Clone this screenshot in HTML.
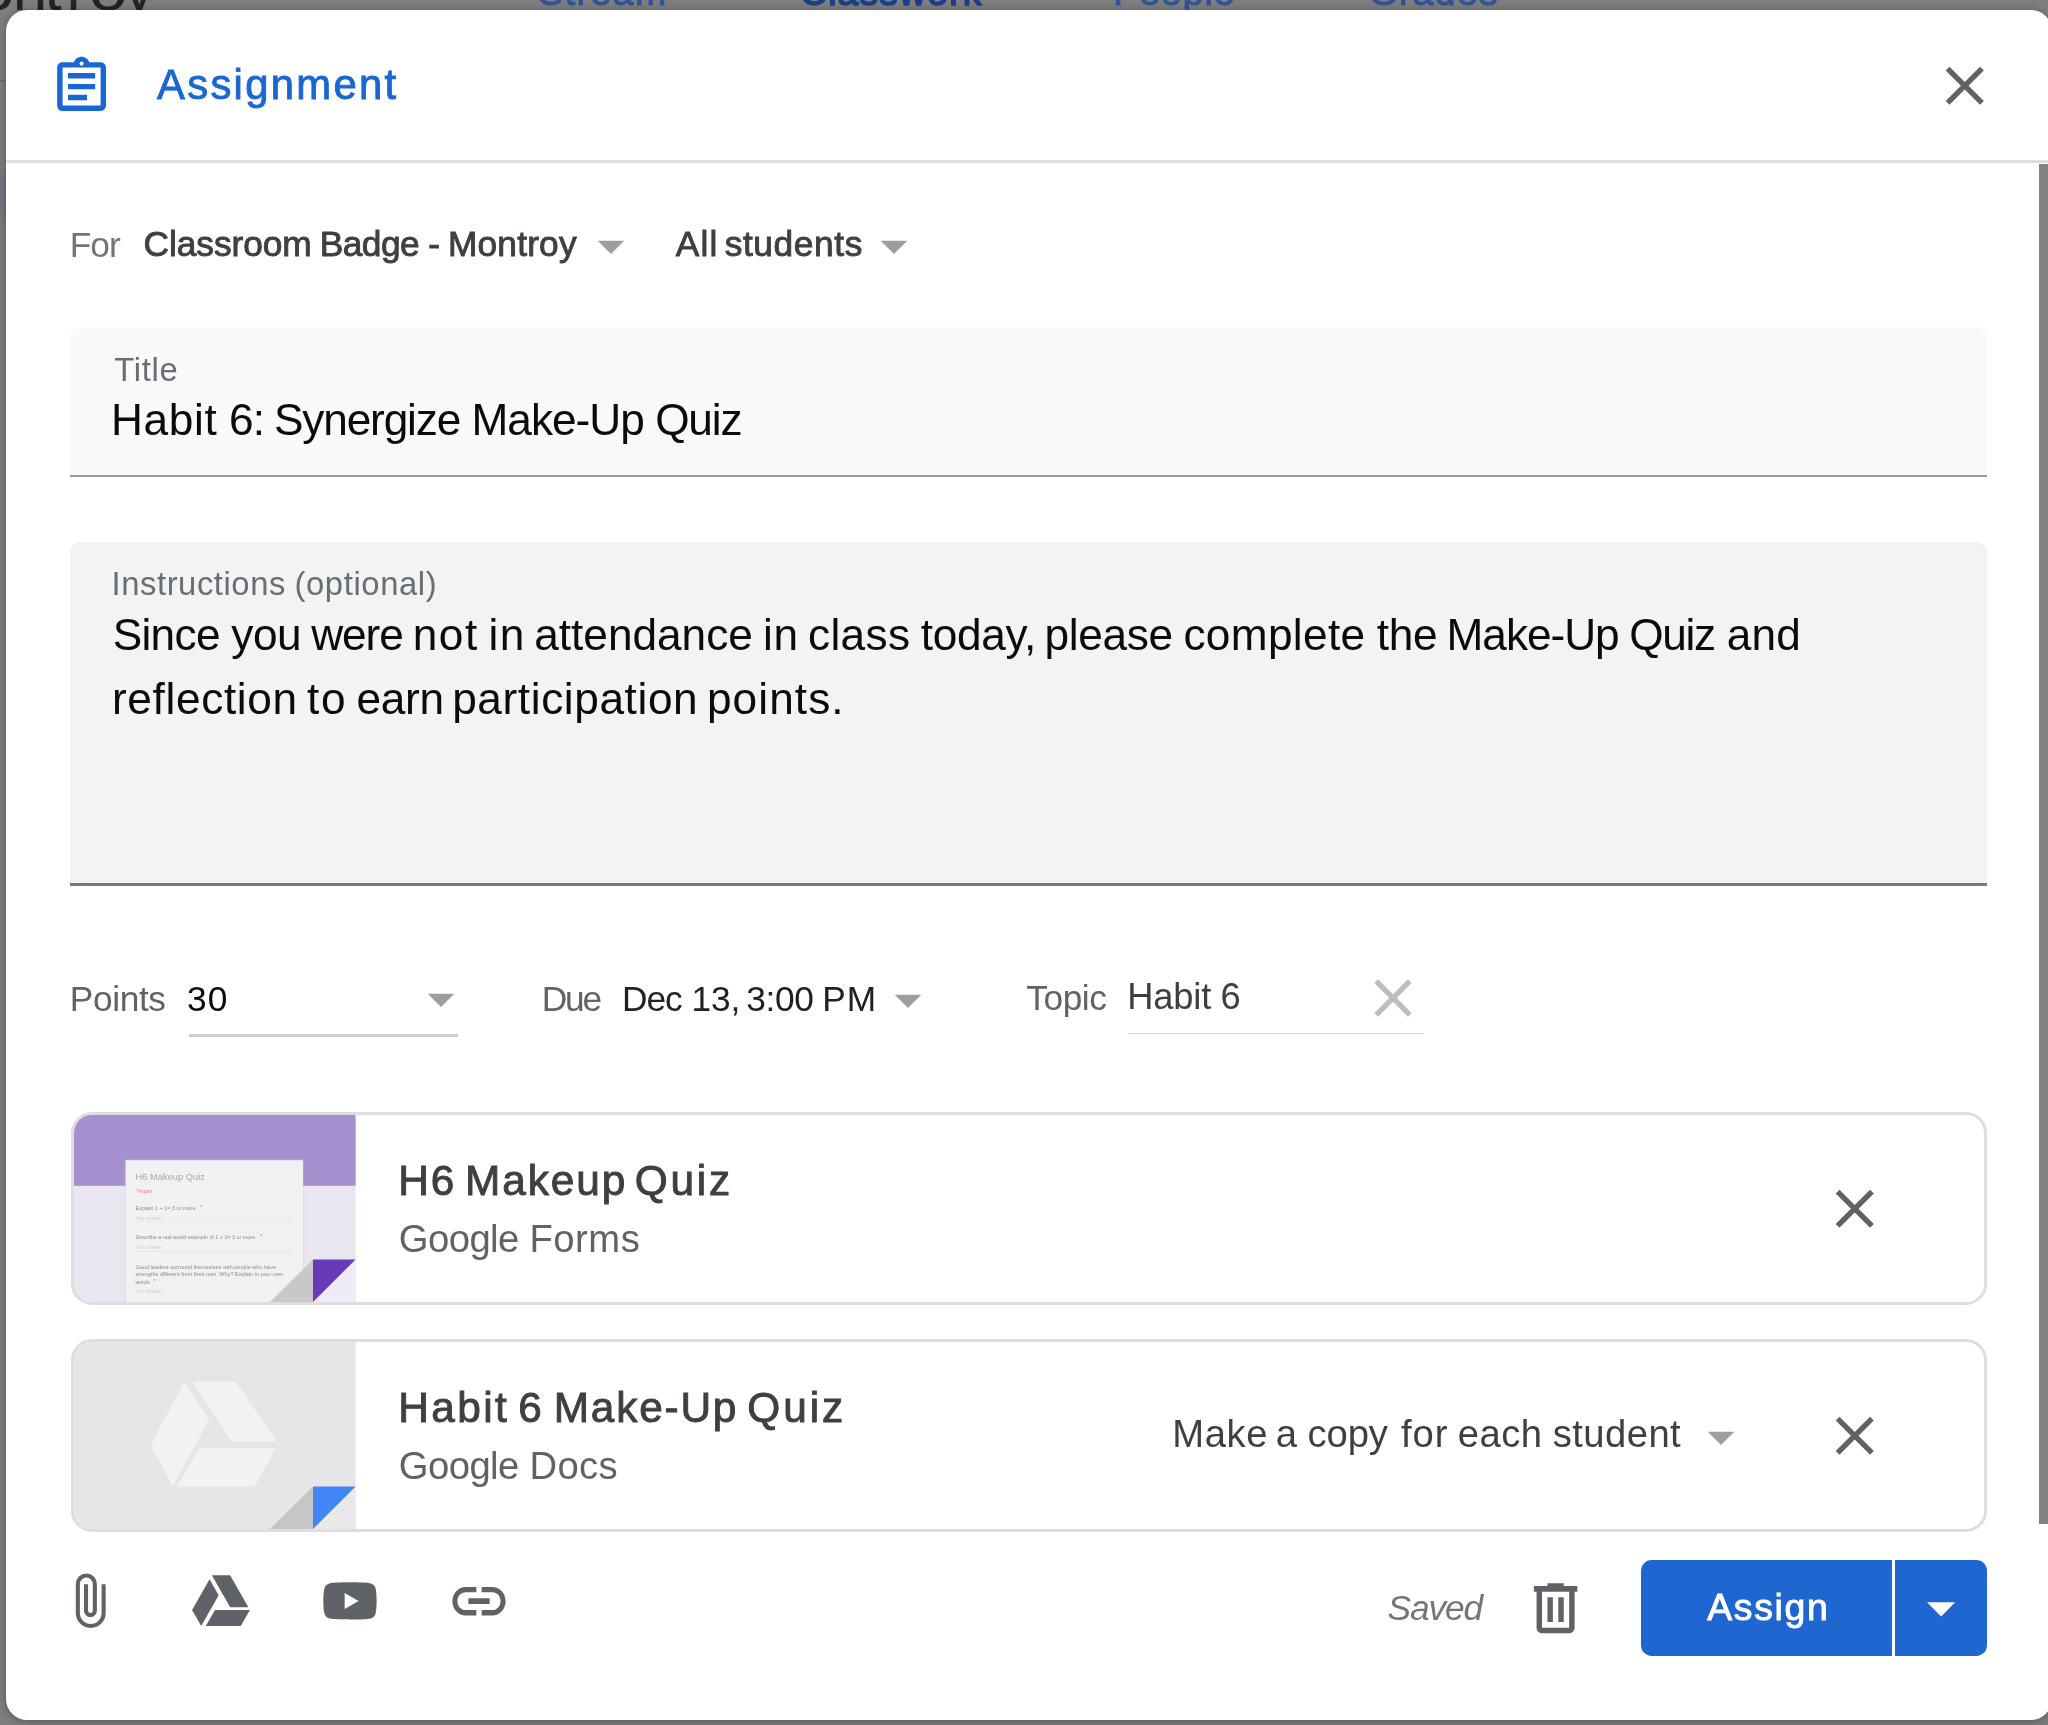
<!DOCTYPE html>
<html><head><meta charset="utf-8"><title>Assignment</title>
<style>
html,body{margin:0;padding:0}
body{width:2048px;height:1725px;overflow:hidden;position:relative;background:#7e7e7e;font-family:'Liberation Sans',sans-serif}
.abs{position:absolute}
.t{position:absolute;white-space:pre;line-height:normal;font-family:'Liberation Sans',sans-serif}
svg{position:absolute;overflow:visible}
.ic{width:64px;height:64px}
#dlg{left:6px;top:10px;width:2046px;height:1710px;background:#fff;border-radius:21px;box-shadow:0 1px 8px rgba(0,0,0,.32)}
.card{left:71px;width:1915.6px;height:193px;box-sizing:border-box;border:3px solid #dcdee2;border-radius:21px;background:#fff;overflow:hidden}
</style></head><body>
<!-- page behind scrim -->
<div style="will-change:transform;position:absolute;left:0;top:0;width:2048px;height:10px;overflow:hidden">
<span class="t" style="left:538.25px;top:-29.3px;font-size:37.4px;letter-spacing:1.5px;color:#2f5597;-webkit-text-stroke:1.1px #2f5597;">Stream</span>
<span class="t" style="left:800.0px;top:-29.3px;font-size:37.4px;letter-spacing:1.125px;color:#1a3f8a;-webkit-text-stroke:1.6px #1a3f8a;">Classwork</span>
<span class="t" style="left:1113.35px;top:-29.3px;font-size:37.4px;letter-spacing:0.94px;color:#2f5597;-webkit-text-stroke:1.1px #2f5597;">People</span>
<span class="t" style="left:1368.75px;top:-29.3px;font-size:37.4px;letter-spacing:1.26px;color:#2f5597;-webkit-text-stroke:1.1px #2f5597;">Grades</span>
<span class="t" style="left:-22.5px;top:-47.4px;font-size:62px;letter-spacing:0px;color:#222326;transform:scaleX(1.13);">o</span>
<span class="t" style="left:12.8px;top:-47.4px;font-size:62px;letter-spacing:0px;color:#222326;">n</span>
<span class="t" style="left:44.5px;top:-47.4px;font-size:62px;letter-spacing:0px;color:#222326;">t</span>
<span class="t" style="left:66.6px;top:-47.4px;font-size:62px;letter-spacing:0px;color:#222326;">r</span>
<span class="t" style="left:90.5px;top:-47.4px;font-size:62px;letter-spacing:0px;color:#222326;transform:scaleX(1.13);">o</span>
<span class="t" style="left:123.5px;top:-47.4px;font-size:62px;letter-spacing:0px;color:#222326;">y</span>
</div>
<div class="abs" style="left:0;top:79.8px;width:6px;height:2.4px;background:#6c6c6c"></div>
<div class="abs" style="left:0;top:160px;width:6px;height:70px;background:linear-gradient(180deg,rgba(100,108,130,0),rgba(100,108,130,.55) 35%,rgba(100,108,130,.45) 60%,rgba(100,108,130,0))"></div>
<div class="abs" id="dlg"></div>
<div class="abs" style="left:6px;top:160px;width:2042px;height:2.8px;background:#dedede"></div>
<div class="abs" style="left:2039px;top:164.4px;width:9px;height:1360px;background:#828282"></div>

<!-- header -->
<svg style="left:48.8px;top:53.6px;width:65.2px;height:65.2px" viewBox="0 0 24 24"><path fill="#1967d2" d="M7 15h7v2H7zm0-4h10v2H7zm0-4h10v2H7zm12-4h-4.180C14.400 1.840 13.300 1 12 1c-1.300 0-2.400.840-2.820 2H5c-.140 0-.270.010-.400.040-.390.080-.740.280-1.010.550-.180.180-.330.400-.430.640-.100.230-.160.490-.160.770v14c0 .270.060.540.160.780s.250.450.430.640c.270.270.620.470 1.010.550.130.020.260.030.400.030h14c1.100 0 2-.900 2-2V5c0-1.100-.900-2-2-2zm-7-.250c.410 0 .750.340.750.750s-.340.750-.750.750-.750-.340-.750-.750.340-.750.750-.750zM19 19H5V5h14v14z"/></svg>
<svg style="left:1932.25px;top:53.25px;width:65.5px;height:65.5px" viewBox="0 0 24 24"><path fill="#5f6368" d="M19 6.410L17.590 5 12 10.590 6.410 5 5 6.410 10.590 12 5 17.590 6.410 19 12 13.410 17.590 19 19 17.590 13.410 12z"/></svg>

<!-- for row arrows -->
<svg class="ic" style="left:579px;top:213.6px" viewBox="0 0 24 24"><path fill="#9e9e9e" d="M7 10l5 5 5-5z"/></svg>
<svg class="ic" style="left:862.3px;top:213.6px" viewBox="0 0 24 24"><path fill="#9e9e9e" d="M7 10l5 5 5-5z"/></svg>

<!-- title field -->
<div class="abs" style="left:70px;top:327.3px;width:1916.5px;height:148px;background:#f8f9fa;border-radius:10.7px 10.7px 0 0"></div>
<div class="abs" style="left:70px;top:474.9px;width:1916.5px;height:2.2px;background:#969ba0"></div>
<!-- instructions field -->
<div class="abs" style="left:70px;top:542.4px;width:1916.5px;height:342px;background:#f1f3f4;border-radius:10.7px 10.7px 0 0"></div>
<div class="abs" style="left:70px;top:883.2px;width:1916.5px;height:3.1px;background:#737a81"></div>

<!-- points/due/topic -->
<div class="abs" style="left:188.5px;top:1034.2px;width:269px;height:2.9px;background:#cfcfcf"></div>
<svg class="ic" style="left:409px;top:966.8px" viewBox="0 0 24 24"><path fill="#9e9e9e" d="M7 10l5 5 5-5z"/></svg>
<svg class="ic" style="left:875.8px;top:967.7px" viewBox="0 0 24 24"><path fill="#9e9e9e" d="M7 10l5 5 5-5z"/></svg>
<div class="abs" style="left:1129px;top:1032.8px;width:295.4px;height:1.4px;background:#d4d6d9"></div>
<svg class="ic" style="left:1360.7px;top:965.5px" viewBox="0 0 24 24"><path fill="#bdbdbd" d="M19 6.410L17.590 5 12 10.590 6.410 5 5 6.410 10.590 12 5 17.590 6.410 19 12 13.410 17.590 19 19 17.590 13.410 12z"/></svg>

<!-- card 1 -->
<div class="abs card" style="top:1112.4px">
<svg style="left:0;top:0;width:281.6px;height:187px" viewBox="0 0 281.6 187">
<defs><filter id="bl" x="-5%" y="-20%" width="110%" height="140%"><feGaussianBlur stdDeviation="0.45"/></filter></defs>
<rect width="281.6" height="187" fill="#e9e6ef"/>
<rect width="281.6" height="70.8" fill="#a58fce"/>
<rect x="50.400" y="43.800" width="179.800" height="144" fill="#cdbfe6" opacity=".3"/>
<rect x="51.600" y="45.200" width="177.400" height="143" fill="#f1f1f1"/>
<g filter="url(#bl)" font-family="'Liberation Sans',sans-serif">
<text x="61.500" y="65.200" font-size="9.600" fill="#a9a9a9" textLength="69.500" lengthAdjust="spacingAndGlyphs">H6 Makeup Quiz</text>
<text x="62" y="78" font-size="4.600" fill="#ee9a90" textLength="16">* Required</text>
<text x="61.500" y="94.700" font-size="6.200" fill="#8c8c8c" textLength="61.500" lengthAdjust="spacingAndGlyphs">Explain 1 + 1= 3 or more.</text>
<text x="126" y="94" font-size="6" fill="#e8766a">*</text>
<text x="62" y="105" font-size="4.800" fill="#cfcfcf" textLength="25" lengthAdjust="spacingAndGlyphs">Your answer</text>
<rect x="62" y="106.600" width="157" height=".7" fill="#e3e3e3"/>
<text x="61.500" y="124.200" font-size="6.200" fill="#8c8c8c" textLength="121" lengthAdjust="spacingAndGlyphs">Describe a real-world example of 1 + 1= 3 or more.</text>
<text x="186" y="123.500" font-size="6" fill="#e8766a">*</text>
<text x="62" y="134.500" font-size="4.800" fill="#cfcfcf" textLength="25" lengthAdjust="spacingAndGlyphs">Your answer</text>
<rect x="62" y="136.200" width="157" height=".7" fill="#e3e3e3"/>
<text x="61.500" y="153.800" font-size="6.200" fill="#8c8c8c" textLength="140.500" lengthAdjust="spacingAndGlyphs">Good leaders surround themselves with people who have</text>
<text x="61.500" y="161.500" font-size="6.200" fill="#8c8c8c" textLength="147.500" lengthAdjust="spacingAndGlyphs">strengths different from their own. Why? Explain in your own</text>
<text x="61.500" y="169.200" font-size="6.200" fill="#8c8c8c" textLength="15.500" lengthAdjust="spacingAndGlyphs">words.</text>
<text x="79.500" y="168.500" font-size="6" fill="#e8766a">*</text>
<text x="62" y="178.500" font-size="4.800" fill="#cfcfcf" textLength="25" lengthAdjust="spacingAndGlyphs">Your answer</text>
</g>
<rect x="239" y="144.400" width="42.600" height="42.600" fill="#f0ebf8"/>
<path d="M196 187L239 144.400V187z" fill="#c8c8c8"/>
<path d="M239 144.400H281.600L239 187z" fill="#673ab7"/>
</svg>
</div>
<svg style="left:1821.75px;top:1175.75px;width:65.5px;height:65.5px" viewBox="0 0 24 24"><path fill="#5f6368" d="M19 6.410L17.590 5 12 10.590 6.410 5 5 6.410 10.590 12 5 17.590 6.410 19 12 13.410 17.590 19 19 17.590 13.410 12z"/></svg>

<!-- card 2 -->
<div class="abs card" style="top:1338.9px">
<svg style="left:0;top:0;width:281.6px;height:187px" viewBox="0 0 281.6 187">
<rect width="281.6" height="187" fill="#e6e6e6"/>
<g fill="#f2f2f2" transform="translate(-74,-1341.900)">
<path d="M184.500 1381.600L209.200 1419.500L172.800 1485.900L150.600 1445z"/>
<path d="M192.500 1381.600H235.800L276.400 1441.400H231.900z"/>
<path d="M199 1448.400H275.600L254.500 1486.300H177.200z"/>
</g>
<rect x="239" y="144.400" width="42.600" height="42.600" fill="#e9e9e9"/>
<path d="M196 187L239 144.400V187z" fill="#c6c6c6"/>
<path d="M239 144.400H281.600L239 187z" fill="#4285f4"/>
</svg>
</div>
<svg class="ic" style="left:1689.1px;top:1404.5px" viewBox="0 0 24 24"><path fill="#9e9e9e" d="M7 10l5 5 5-5z"/></svg>
<svg style="left:1821.75px;top:1403.25px;width:65.5px;height:65.5px" viewBox="0 0 24 24"><path fill="#5f6368" d="M19 6.410L17.590 5 12 10.590 6.410 5 5 6.410 10.590 12 5 17.590 6.410 19 12 13.410 17.590 19 19 17.590 13.410 12z"/></svg>

<!-- footer icons -->
<svg style="left:0;top:0;width:2048px;height:1725px" viewBox="0 0 2048 1725"><path fill="none" stroke="#5f6368" stroke-width="4.100" d="M103.650 1584.300V1613.050A12.900 12.900 0 0 1 77.850 1613.050V1583.950A8.500 8.500 0 0 1 94.850 1583.950V1610.750A4.400 4.400 0 0 1 86.050 1610.750V1584.300"/></svg>
<svg class="ic" style="left:189.4px;top:1569.9px" viewBox="0 0 24 24"><path fill="#5f6368" d="M7.710 3.500L1.150 15l3.430 6 6.550-11.500L7.710 3.500zM9.730 15L6.300 21h13.120l3.430-6H9.730zM22.280 14L15.420 2H8.580l6.860 12h6.840z"/></svg>
<svg class="ic" style="left:318px;top:1569.1px" viewBox="0 0 24 24"><path fill="#5f6368" d="M21.580 7.190c-.230-.860-.910-1.540-1.770-1.770C18.250 5 12 5 12 5s-6.250 0-7.810.420c-.860.230-1.540.910-1.770 1.770C2 8.750 2 12 2 12s0 3.250.420 4.810c.230.860.910 1.540 1.770 1.770C5.750 19 12 19 12 19s6.250 0 7.810-.420c.860-.230 1.540-.910 1.770-1.770C22 15.250 22 12 22 12s0-3.250-.420-4.810zM10 15V9l5.200 3-5.200 3z"/></svg>
<svg style="left:447px;top:1566.5px;width:64px;height:68.4px" preserveAspectRatio="none" viewBox="0 0 24 24"><path fill="#5f6368" d="M3.900 12c0-1.710 1.390-3.100 3.100-3.100h4V7H7c-2.760 0-5 2.240-5 5s2.240 5 5 5h4v-1.900H7c-1.710 0-3.100-1.390-3.100-3.100zM8 13h8v-2H8v2zm9-6h-4v1.900h4c1.710 0 3.100 1.390 3.100 3.100s-1.390 3.100-3.100 3.100h-4V17h4c2.760 0 5-2.240 5-5s-2.240-5-5-5z"/></svg>
<svg style="left:1522.9px;top:1575.1px;width:65.2px;height:66.5px" preserveAspectRatio="none" viewBox="0 0 24 24"><path fill="#5f6368" d="M15 4V3H9v1H4v2h1v13c0 1.100.900 2 2 2h10c1.100 0 2-.900 2-2V6h1V4h-5zm2 15H7V6h10v13zM9 8h2v9H9zm4 0h2v9h-2z"/></svg>

<!-- assign button -->
<div class="abs" style="left:1641px;top:1560.300px;width:251.300px;height:96.100px;background:#1f66d1;border-radius:10.700px 0 0 10.700px"></div>
<div class="abs" style="left:1895.400px;top:1560.300px;width:91.400px;height:96.100px;background:#1f66d1;border-radius:0 10.700px 10.700px 0"></div>
<svg style="left:1927.200px;top:1602px;width:28.200px;height:14.700px" viewBox="0 0 10 5"><path fill="#fff" d="M0 0l5 5 5-5z"/></svg>

<div style="will-change:transform;position:absolute;left:0;top:0;width:2048px;height:1725px">
<span class="t" style="left:157.05px;top:61.2px;font-size:41.8px;letter-spacing:2.3px;color:#1967d2;-webkit-text-stroke:0.9px #1967d2;">Assignment</span>
<span class="t" style="left:69.65px;top:224.9px;font-size:35.3px;letter-spacing:-0.95px;color:#70757a;">For</span>
<span class="t" style="left:143.5px;top:223.9px;font-size:35.3px;letter-spacing:-0.05px;color:#3c4043;-webkit-text-stroke:0.9px #3c4043;">Classroom</span>
<span class="t" style="left:319.75px;top:223.9px;font-size:35.3px;letter-spacing:-0.525px;color:#3c4043;-webkit-text-stroke:0.9px #3c4043;">Badge</span>
<span class="t" style="left:428.25px;top:223.9px;font-size:35.3px;letter-spacing:0px;color:#3c4043;-webkit-text-stroke:0.9px #3c4043;">-</span>
<span class="t" style="left:447.9px;top:223.9px;font-size:35.3px;letter-spacing:0.2px;color:#3c4043;-webkit-text-stroke:0.9px #3c4043;">Montroy</span>
<span class="t" style="left:675.75px;top:223.9px;font-size:35.3px;letter-spacing:1.15px;color:#3c4043;-webkit-text-stroke:0.9px #3c4043;">All</span>
<span class="t" style="left:724.7px;top:223.9px;font-size:35.3px;letter-spacing:0.6px;color:#3c4043;-webkit-text-stroke:0.9px #3c4043;">students</span>
<span class="t" style="left:114.15px;top:350.7px;font-size:32.8px;letter-spacing:0.725px;color:#696e73;">Title</span>
<span class="t" style="left:111.0px;top:394.5px;font-size:44.2px;letter-spacing:0.65px;color:#0b0b0b;">Habit</span>
<span class="t" style="left:228.9px;top:394.5px;font-size:44.2px;letter-spacing:-0.6px;color:#0b0b0b;">6:</span>
<span class="t" style="left:274.0px;top:394.5px;font-size:44.2px;letter-spacing:-1.15px;color:#0b0b0b;">Synergize</span>
<span class="t" style="left:471.5px;top:394.5px;font-size:44.2px;letter-spacing:-1.0px;color:#0b0b0b;">Make-Up</span>
<span class="t" style="left:655.15px;top:394.5px;font-size:44.2px;letter-spacing:-1.167px;color:#0b0b0b;">Quiz</span>
<span class="t" style="left:111.55px;top:564.7px;font-size:32.8px;letter-spacing:0.555px;color:#696e73;">Instructions</span>
<span class="t" style="left:294.5px;top:564.7px;font-size:32.8px;letter-spacing:0.6px;color:#696e73;">(optional)</span>
<span class="t" style="left:112.65px;top:610.0px;font-size:44.2px;letter-spacing:-0.675px;color:#0b0b0b;">Since</span>
<span class="t" style="left:231.3px;top:610.0px;font-size:44.2px;letter-spacing:-0.5px;color:#0b0b0b;">you</span>
<span class="t" style="left:311.15px;top:610.0px;font-size:44.2px;letter-spacing:-1.033px;color:#0b0b0b;">were</span>
<span class="t" style="left:412.65px;top:610.0px;font-size:44.2px;letter-spacing:1.55px;color:#0b0b0b;">not</span>
<span class="t" style="left:488.6px;top:610.0px;font-size:44.2px;letter-spacing:1.4px;color:#0b0b0b;">in</span>
<span class="t" style="left:534.3px;top:610.0px;font-size:44.2px;letter-spacing:-0.021px;color:#0b0b0b;">attendance</span>
<span class="t" style="left:763.0px;top:610.0px;font-size:44.2px;letter-spacing:0.8px;color:#0b0b0b;">in</span>
<span class="t" style="left:808.05px;top:610.0px;font-size:44.2px;letter-spacing:0.325px;color:#0b0b0b;">class</span>
<span class="t" style="left:920.8px;top:610.0px;font-size:44.2px;letter-spacing:-0.32px;color:#0b0b0b;">today,</span>
<span class="t" style="left:1044.6px;top:610.0px;font-size:44.2px;letter-spacing:-0.36px;color:#0b0b0b;">please</span>
<span class="t" style="left:1183.4px;top:610.0px;font-size:44.2px;letter-spacing:0.342px;color:#0b0b0b;">complete</span>
<span class="t" style="left:1376.8px;top:610.0px;font-size:44.2px;letter-spacing:-0.3px;color:#0b0b0b;">the</span>
<span class="t" style="left:1446.6px;top:610.0px;font-size:44.2px;letter-spacing:-1.034px;color:#0b0b0b;">Make-Up</span>
<span class="t" style="left:1629.25px;top:610.0px;font-size:44.2px;letter-spacing:-1.3px;color:#0b0b0b;">Quiz</span>
<span class="t" style="left:1726.75px;top:610.0px;font-size:44.2px;letter-spacing:0.15px;color:#0b0b0b;">and</span>
<span class="t" style="left:111.95px;top:673.9px;font-size:44.2px;letter-spacing:0.655px;color:#0b0b0b;">reflection</span>
<span class="t" style="left:306.95px;top:673.9px;font-size:44.2px;letter-spacing:1.9px;color:#0b0b0b;">to</span>
<span class="t" style="left:356.6px;top:673.9px;font-size:44.2px;letter-spacing:-0.333px;color:#0b0b0b;">earn</span>
<span class="t" style="left:452.2px;top:673.9px;font-size:44.2px;letter-spacing:0.6px;color:#0b0b0b;">participation</span>
<span class="t" style="left:706.95px;top:673.9px;font-size:44.2px;letter-spacing:1.083px;color:#0b0b0b;">points.</span>
<span class="t" style="left:69.75px;top:978.9px;font-size:35.3px;letter-spacing:-0.38px;color:#5f6368;">Points</span>
<span class="t" style="left:186.95px;top:979.2px;font-size:35.3px;letter-spacing:1.3px;color:#0b0b0b;">30</span>
<span class="t" style="left:541.85px;top:979.4px;font-size:35.3px;letter-spacing:-2.25px;color:#5f6368;">Due</span>
<span class="t" style="left:621.95px;top:979.4px;font-size:35.3px;letter-spacing:-1.05px;color:#202124;">Dec</span>
<span class="t" style="left:691.45px;top:979.4px;font-size:35.3px;letter-spacing:-0.15px;color:#202124;">13,</span>
<span class="t" style="left:746.2px;top:979.4px;font-size:35.3px;letter-spacing:-0.333px;color:#202124;">3:00</span>
<span class="t" style="left:822.25px;top:979.4px;font-size:35.3px;letter-spacing:0.9px;color:#202124;">PM</span>
<span class="t" style="left:1026.35px;top:977.8px;font-size:35.3px;letter-spacing:-0.475px;color:#5f6368;">Topic</span>
<span class="t" style="left:1127.3px;top:975.8px;font-size:36.3px;letter-spacing:-0.2px;color:#3c4043;">Habit</span>
<span class="t" style="left:1220.5px;top:975.8px;font-size:36.3px;letter-spacing:0px;color:#3c4043;">6</span>
<span class="t" style="left:398.15px;top:1156.7px;font-size:42.4px;letter-spacing:1.9px;color:#3c4043;-webkit-text-stroke:0.9px #3c4043;">H6</span>
<span class="t" style="left:465.0px;top:1156.7px;font-size:42.4px;letter-spacing:1.92px;color:#3c4043;-webkit-text-stroke:0.9px #3c4043;">Makeup</span>
<span class="t" style="left:634.7px;top:1156.7px;font-size:42.4px;letter-spacing:2.8px;color:#3c4043;-webkit-text-stroke:0.9px #3c4043;">Quiz</span>
<span class="t" style="left:398.85px;top:1217.2px;font-size:38.2px;letter-spacing:-0.54px;color:#5f6368;">Google</span>
<span class="t" style="left:529.45px;top:1217.2px;font-size:38.2px;letter-spacing:0.525px;color:#5f6368;">Forms</span>
<span class="t" style="left:398.25px;top:1383.5px;font-size:42.4px;letter-spacing:2.375px;color:#3c4043;-webkit-text-stroke:0.9px #3c4043;">Habit</span>
<span class="t" style="left:518.35px;top:1383.5px;font-size:42.4px;letter-spacing:0px;color:#3c4043;-webkit-text-stroke:0.9px #3c4043;">6</span>
<span class="t" style="left:553.75px;top:1383.5px;font-size:42.4px;letter-spacing:1.783px;color:#3c4043;-webkit-text-stroke:0.9px #3c4043;">Make-Up</span>
<span class="t" style="left:747.25px;top:1383.5px;font-size:42.4px;letter-spacing:2.967px;color:#3c4043;-webkit-text-stroke:0.9px #3c4043;">Quiz</span>
<span class="t" style="left:398.85px;top:1444.4px;font-size:38.2px;letter-spacing:-0.54px;color:#5f6368;">Google</span>
<span class="t" style="left:529.45px;top:1444.4px;font-size:38.2px;letter-spacing:0.366px;color:#5f6368;">Docs</span>
<span class="t" style="left:1172.35px;top:1411.8px;font-size:38.2px;letter-spacing:0.567px;color:#3c4043;">Make</span>
<span class="t" style="left:1275.8px;top:1411.8px;font-size:38.2px;letter-spacing:0px;color:#3c4043;">a</span>
<span class="t" style="left:1307.55px;top:1411.8px;font-size:38.2px;letter-spacing:-0.099px;color:#3c4043;">copy</span>
<span class="t" style="left:1401.1px;top:1411.8px;font-size:38.2px;letter-spacing:0.9px;color:#3c4043;">for</span>
<span class="t" style="left:1457.8px;top:1411.8px;font-size:38.2px;letter-spacing:0.466px;color:#3c4043;">each</span>
<span class="t" style="left:1552.75px;top:1411.8px;font-size:38.2px;letter-spacing:0.449px;color:#3c4043;">student</span>
<span class="t" style="left:1387.52px;top:1588.4px;font-size:35.3px;letter-spacing:-1.089px;color:#757575;font-style:italic;">Saved</span>
<span class="t" style="left:1707.15px;top:1585.5px;font-size:37.4px;letter-spacing:1.7px;color:#ffffff;-webkit-text-stroke:0.9px #ffffff;">Assign</span>
</div>
</body></html>
